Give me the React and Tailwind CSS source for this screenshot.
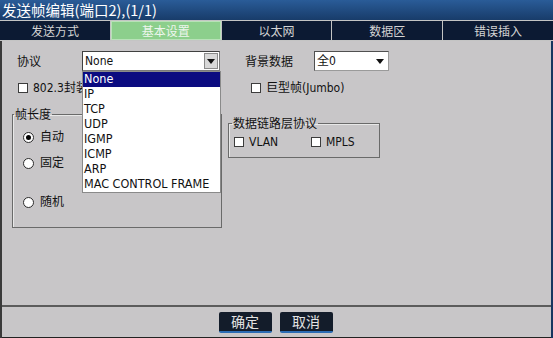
import React from 'react';

const FONT = { fontFamily: '"DejaVu Sans Condensed", "DejaVu Sans", "Noto Sans CJK SC", sans-serif' };
const CJK = { fontFamily: '"Noto Sans CJK SC", "DejaVu Sans", sans-serif' };

const tabs = ['发送方式', '基本设置', '以太网', '数据区', '错误插入'];
const protocols = ['None', 'IP', 'TCP', 'UDP', 'IGMP', 'ICMP', 'ARP', 'MAC CONTROL FRAME'];

const Check = ({ label, className = '' }) => (
    <div className={`flex items-center h-[14px] ${className}`}>
        <span className="w-[10px] h-[10px] bg-white border border-[#3c3c3c] shrink-0" />
        <span className="ml-[5px] text-[12px] text-[#111] whitespace-nowrap leading-none">{label}</span>
    </div>
);

const Radio = ({ label, checked, className = '' }) => (
    <div className={`flex items-center h-[14px] ${className}`}>
        <span className="w-[11px] h-[11px] rounded-full bg-white border border-[#2c2c2c] flex items-center justify-center shrink-0">
            {checked && <span className="w-[5px] h-[5px] rounded-full bg-black" />}
        </span>
        <span className="ml-[6px] text-[12px] text-[#111] leading-none">{label}</span>
    </div>
);

const Arrow = () => (
    <svg width="8" height="5" viewBox="0 0 8 5">
        <path d="M0 0H8L4 5Z" fill="#111" />
    </svg>
);

const App = () => {
    return (
        <div className="w-[553px] h-[338px] flex flex-col bg-[#17365f] overflow-hidden" style={FONT}>
            {/* title */}
            <div className="h-[20px] flex items-center pl-[2px] bg-linear-to-b from-[#2a5c98] to-[#183c6a]">
                <span className="text-[14.5px] text-white leading-none" style={CJK}>发送帧编辑(端口2),(1/1)</span>
            </div>

            {/* tabs */}
            <div className="grid grid-cols-5 gap-px py-px bg-[#c4c4c4]" style={CJK}>
                {tabs.map((t, i) => (
                    <div
                        key={t}
                        className={`h-[19px] flex items-center justify-center text-[12px] leading-none ${
                            i === 1 ? 'bg-[#8ccf8c] text-[#eef6ee] border border-[#b8e2b8]' : 'bg-[#0c1a33] text-[#d4d4d4]'
                        }`}
                    >
                        {t}
                    </div>
                ))}
            </div>

            <div className="flex-1 flex flex-col mr-[2px] border-l-2 border-[#3a3a3a] bg-[#c8c6c8]">
                {/* content */}
                <div className="relative h-[266px] border-b-2 border-[#5c5c5c] flex pt-[10px] pl-[10px]">
                    {/* left column */}
                    <div className="w-[210px] flex flex-col">
                        <div className="h-[20px] flex items-center">
                            <span className="w-[70px] pl-[5px] text-[12px] text-[#111]" style={CJK}>协议</span>
                            <div className="w-[138px] h-[20px] bg-white border border-[#7a7a7a] border-t-[#404040] border-l-[#404040] flex items-center">
                                <span className="flex-1 pl-[2px] text-[12px] text-[#111]">None</span>
                                <span className="w-[14px] h-[16px] mr-px bg-[#d8d8d8] border border-[#8a8a8a] flex items-center justify-center">
                                    <Arrow />
                                </span>
                            </div>
                        </div>
                        <Check label="802.3封装" className="mt-[10px] pl-[6px]" />
                        <fieldset className="mt-[11px] h-[122px] w-[210px] border border-[#6a6a6a] shadow-[inset_1px_1px_0_#e8e8e8]">
                            <legend className="ml-[1px] px-[1px] text-[12px] leading-[16px] text-[#111]" style={CJK}>帧长度</legend>
                            <div className="flex flex-col pl-[10px]">
                                <Radio label="自动" checked className="mt-[8px]" />
                                <Radio label="固定" className="mt-[12px]" />
                                <Radio label="随机" className="mt-[25px]" />
                            </div>
                        </fieldset>
                    </div>

                    {/* right column */}
                    <div className="ml-[6px] flex flex-col">
                        <div className="h-[20px] flex items-center">
                            <span className="w-[86px] pl-[17px] text-[12px] text-[#111]" style={CJK}>背景数据</span>
                            <div className="w-[75px] h-[20px] bg-white border border-[#9a9a9a] border-t-[#505050] border-l-[#505050] flex items-center">
                                <span className="flex-1 pl-[2px] text-[12px] text-[#111]">全0</span>
                                <span className="mr-[4px] flex items-center"><Arrow /></span>
                            </div>
                        </div>
                        <Check label="巨型帧(Jumbo)" className="mt-[10px] pl-[23px]" />
                        <fieldset className="mt-[20px] h-[43px] w-[152px] border border-[#6a6a6a] shadow-[inset_1px_1px_0_#e8e8e8]">
                            <legend className="ml-[3px] px-[1px] text-[12px] leading-[16px] text-[#111]" style={CJK}>数据链路层协议</legend>
                            <div className="flex pl-[5px] mt-[4px]">
                                <Check label="VLAN" className="w-[77px]" />
                                <Check label="MPLS" />
                            </div>
                        </fieldset>
                    </div>

                    {/* open dropdown list */}
                    <div className="absolute left-[80px] top-[30px] w-[139px] h-[122px] bg-white border border-[#8a8a8a] flex flex-col">
                        {protocols.map((p, i) => (
                            <div
                                key={p}
                                className={`h-[15px] pl-[1px] flex items-center text-[12.5px] leading-none whitespace-nowrap ${
                                    i === 0 ? 'bg-[#0b0b80] text-white' : 'text-[#111]'
                                }`}
                            >
                                {p}
                            </div>
                        ))}
                    </div>
                </div>

                {/* footer */}
                <div className="flex-1 flex items-center justify-center gap-[8px] pr-[2px] border-b border-[#222]" style={CJK}>
                    <button className="w-[53px] h-[21px] rounded-[2px] bg-[#131c2a] border-b-2 border-[#2b6bb3] text-[14px] text-[#e2e2e2] leading-none">确定</button>
                    <button className="w-[53px] h-[21px] rounded-[2px] bg-[#131c2a] border-b-2 border-[#2b6bb3] text-[14px] text-[#e2e2e2] leading-none">取消</button>
                </div>
            </div>
        </div>
    );
};

export default App;
